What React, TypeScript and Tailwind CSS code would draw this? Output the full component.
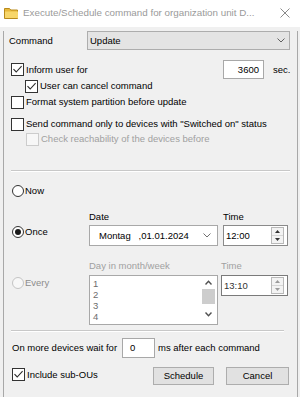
import React from 'react';

function Check({ checked = false, disabled = false }: { checked?: boolean; disabled?: boolean }) {
  return (
    <span
      className={`flex h-[13px] w-[13px] shrink-0 items-center justify-center border ${
        disabled ? 'border-[#cccccc] bg-[#f7f7f7]' : 'border-[#333333] bg-white'
      }`}
    >
      {checked && (
        <svg width="11" height="11" viewBox="0 0 11 11">
          <path d="M1.5 5.2 L4.2 8 L9.6 2.2" fill="none" stroke="#2b2b2b" strokeWidth="1.1" />
        </svg>
      )}
    </span>
  );
}

function Radio({ checked = false, disabled = false }: { checked?: boolean; disabled?: boolean }) {
  return (
    <span
      className={`flex h-[12px] w-[12px] shrink-0 items-center justify-center rounded-full border ${
        disabled ? 'border-[#c4c4c4] bg-[#f7f7f7]' : 'border-[#333333] bg-white'
      }`}
    >
      {checked && <span className="h-[6px] w-[6px] rounded-full bg-[#1a1a1a]" />}
    </span>
  );
}

function Chevron({ color = '#606060' }: { color?: string }) {
  return (
    <svg width="8" height="5" viewBox="0 0 8 5">
      <path d="M0.5 0.5 L4 4 L7.5 0.5" fill="none" stroke={color} strokeWidth="1" />
    </svg>
  );
}

function Spinner({ disabled = false }: { disabled?: boolean }) {
  const c = disabled ? '#9a9a9a' : '#333333';
  return (
    <div className="flex h-[17px] w-[13px] flex-col border border-[#b9b9b9]">
      <div className="flex flex-1 items-center justify-center border-b border-[#d6d6d6] bg-[#f3f3f3]">
        <svg width="5" height="3" viewBox="0 0 5 3">
          <path d="M0 3 L2.5 0 L5 3 Z" fill={c} />
        </svg>
      </div>
      <div className="flex flex-1 items-center justify-center bg-[#f3f3f3]">
        <svg width="5" height="3" viewBox="0 0 5 3">
          <path d="M0 0 L2.5 3 L5 0 Z" fill={c} />
        </svg>
      </div>
    </div>
  );
}

export default function App() {
  return (
    <div className="h-[397px] w-[300px] overflow-hidden bg-[#f0f0f0] font-['Liberation_Sans',Arial,sans-serif] text-[9.5px] leading-none text-black">
      {/* title bar */}
      <div className="flex h-[27px] items-start bg-white">
        <svg className="ml-[4px] mt-[7px]" width="15" height="12" viewBox="0 0 15 12">
          <path d="M0.5 1.5 H5.5 L6.8 3 H13.5 V11.5 H0.5 Z" fill="#e8b83a" stroke="#b88a1c" strokeWidth="1" />
          <path d="M1 4.5 H14 V11 H1 Z" fill="#f7d66a" />
        </svg>
        <span className="ml-[4px] mt-[8px] text-[9.8px] text-[#9a9a9a]">
          Execute/Schedule command for organization unit D...
        </span>
        <svg className="ml-auto mr-[10px] mt-[8px]" width="10" height="10" viewBox="0 0 10 10">
          <path d="M0.5 0.5 L9.5 9.5 M9.5 0.5 L0.5 9.5" stroke="#8a8a8a" strokeWidth="1" />
        </svg>
      </div>

      {/* dialog frame */}
      <div className="ml-[3px] h-[369px] w-[295px] border-x border-b border-[#a8a8a8]">
        {/* command */}
        <div className="mt-[4px] flex h-[19px] items-center pl-[5px]">
          <span className="w-[78px]">Command</span>
          <div className="flex h-[19px] w-[203px] items-center justify-between border border-[#adadad] bg-[#e4e4e4] pl-[2px] pr-[4px]">
            <span>Update</span>
            <Chevron />
          </div>
        </div>

        {/* inform */}
        <div className="mt-[10px] flex h-[19px] items-center pl-[7px]">
          <div className="flex w-[212px] items-center gap-[2px]">
            <Check checked />
            <span>Inform user for</span>
          </div>
          <div className="flex h-[19px] w-[41px] items-center justify-end border border-[#a8a8a8] bg-white pr-[4px]">
            3600
          </div>
          <span className="ml-[9px]">sec.</span>
        </div>

        <div className="flex h-[14px] items-center gap-[2px] pl-[21px]">
          <Check checked />
          <span>User can cancel command</span>
        </div>

        <div className="mt-[2px] flex h-[14px] items-center gap-[2px] pl-[7px]">
          <Check />
          <span>Format system partition before update</span>
        </div>

        <div className="mt-[8px] flex h-[14px] items-center gap-[2px] pl-[7px]">
          <Check />
          <span>Send command only to devices with "Switched on" status</span>
        </div>

        <div className="mt-[1px] flex h-[14px] items-center gap-[2px] pl-[22px]">
          <Check disabled />
          <span className="text-[#a0a0a0]">Check reachability of the devices before</span>
        </div>

        {/* separator */}
        <div className="ml-[7px] mt-[24px] h-[2px] w-[279px] border-t border-b border-t-[#c8c8c8] border-b-white" />

        {/* now */}
        <div className="mt-[12px] flex h-[14px] items-center gap-[1px] pl-[8px]">
          <Radio />
          <span>Now</span>
        </div>

        {/* once labels */}
        <div className="mt-[13px] flex h-[12px] items-center pl-[85px]">
          <span className="w-[134px]">Date</span>
          <span>Time</span>
        </div>

        {/* once */}
        <div className="mt-[2px] flex h-[21px]">
          <div className="flex w-[85px] items-center gap-[1px] self-start pl-[8px] pt-[1px]">
            <Radio checked />
            <span>Once</span>
          </div>
          <div className="flex h-[21px] w-[129px] items-center justify-between border border-[#a8a8a8] bg-white pl-[9px] pr-[6px]">
            <span className="whitespace-pre">Montag   ,01.01.2024</span>
            <Chevron color="#707070" />
          </div>
          <div className="ml-[5px] flex h-[21px] w-[65px] items-center justify-between border border-[#8a8a8a] bg-white pl-[2px] pr-[3px]">
            <span>12:00</span>
            <Spinner />
          </div>
        </div>

        {/* every labels */}
        <div className="mt-[14px] flex h-[12px] items-center pl-[85px] text-[#a0a0a0]">
          <span className="w-[132px]">Day in month/week</span>
          <span>Time</span>
        </div>

        {/* every */}
        <div className="mt-[3px] flex h-[50px]">
          <div className="flex w-[85px] items-center gap-[1px] self-start pl-[8px] pt-[2px]">
            <Radio disabled />
            <span className="text-[#8c8c8c]">Every</span>
          </div>
          <div className="flex h-[50px] w-[129px] border border-[#a8a8a8] bg-white">
            <div className="flex flex-1 flex-col pl-[3px] pt-[2px] text-[#6d6d6d]">
              <span className="h-[11px] leading-[11px]">1</span>
              <span className="h-[11px] leading-[11px]">2</span>
              <span className="h-[11px] leading-[11px]">3</span>
              <span className="h-[11px] leading-[11px]">4</span>
            </div>
            <div className="mr-[2px] flex w-[13px] flex-col items-center">
              <div className="flex h-[13px] items-center justify-center">
                <svg width="7" height="5" viewBox="0 0 7 5">
                  <path d="M0.5 4.5 L3.5 1.2 L6.5 4.5" fill="none" stroke="#505050" strokeWidth="1.4" />
                </svg>
              </div>
              <div className="h-[15px] w-[13px] bg-[#cdcdcd]" />
              <div className="flex flex-1 items-center justify-center">
                <svg width="7" height="5" viewBox="0 0 7 5">
                  <path d="M0.5 0.5 L3.5 3.8 L6.5 0.5" fill="none" stroke="#505050" strokeWidth="1.4" />
                </svg>
              </div>
            </div>
          </div>
          <div className="ml-[3px] flex h-[21px] w-[67px] items-center justify-between border border-[#7a7a7a] bg-white pl-[2px] pr-[3px]">
            <span className="text-[#333]">13:10</span>
            <Spinner disabled />
          </div>
        </div>

        {/* separator */}
        <div className="ml-[7px] mt-[5px] h-[2px] w-[273px] border-t border-b border-t-[#c8c8c8] border-b-white" />

        {/* wait */}
        <div className="mt-[6px] flex h-[19px] items-center pl-[8px]">
          <span className="w-[110px]">On more devices wait for</span>
          <div className="flex h-[20px] w-[33px] items-center border border-[#a8a8a8] bg-white pl-[7px]">0</div>
          <span className="ml-[3px]">ms after each command</span>
        </div>

        {/* bottom */}
        <div className="mt-[10px] flex h-[18px] pl-[8px]">
          <div className="flex w-[141px] items-center gap-[2px] self-start pt-[1px]">
            <Check checked />
            <span>Include sub-OUs</span>
          </div>
          <button className="flex h-[18px] w-[61px] items-center justify-center border border-[#adadad] bg-[#e1e1e1]">
            Schedule
          </button>
          <button className="ml-[12px] flex h-[18px] w-[63px] items-center justify-center border border-[#adadad] bg-[#e1e1e1]">
            Cancel
          </button>
        </div>
      </div>
    </div>
  );
}
